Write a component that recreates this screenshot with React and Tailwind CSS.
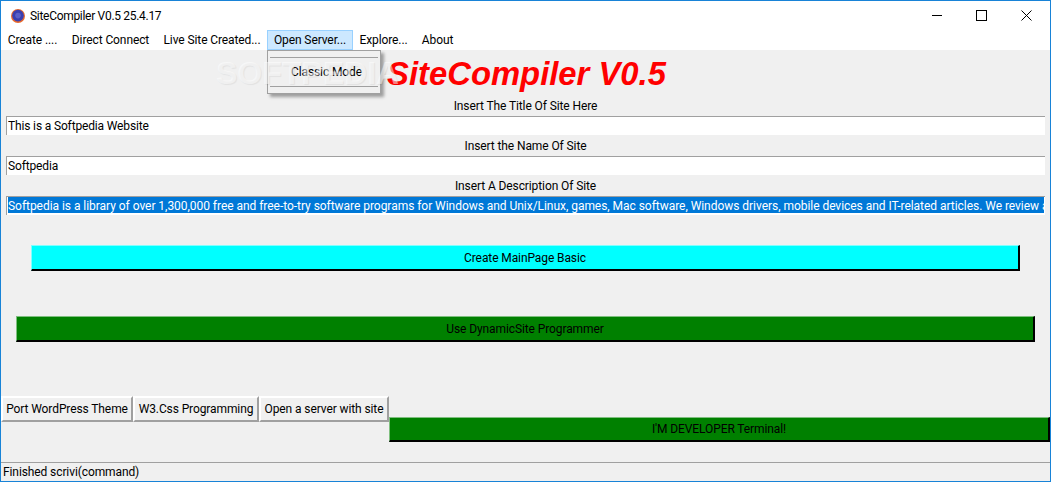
const menus = [
  { label: "Create ....", width: "w-[63px]" },
  { label: "Direct Connect", width: "w-[93px]" },
  { label: "Live Site Created...", width: "w-[110px]" },
  { label: "Open Server...", width: "w-[86px]" },
  { label: "Explore...", width: "w-[61px]" },
  { label: "About", width: "w-[47px]" },
];
const description =
  "Softpedia is a library of over 1,300,000 free and free-to-try software programs for Windows and Unix/Linux, games, Mac software, Windows drivers, mobile devices and IT-related articles. We review and categorize these products";

function Field({ label, value, selected }) {
  return (
    <div className="flex flex-col">
      <div className="h-5 flex items-center justify-center leading-none">{label}</div>
      <div className="h-[19px] mb-px mx-[5px] bg-white border-t border-l border-t-[#a0a0a0] border-l-[#a0a0a0] pl-px pr-px overflow-hidden">
        <div className={`h-4 leading-[18px] whitespace-nowrap overflow-hidden ${selected ? "bg-[#0078d7] text-white tracking-[-0.04px]" : "tracking-[-0.15px]"}`}>
          {value}
        </div>
      </div>
    </div>
  );
}

function TkButton({ label, className }) {
  return (
    <div className={`border border-t-[#7fbf7f] border-l-[#7fbf7f] border-r-2 border-r-black border-b-2 border-b-black flex items-center justify-center ${className}`}>
      {label}
    </div>
  );
}

function RaisedButton({ label, width }) {
  return (
    <div className={`h-[26px] ${width} bg-[#f0f0f0] border-2 border-t-white border-l-white border-r-[#a0a0a0] border-b-[#a0a0a0] flex items-center justify-center whitespace-nowrap`}>
      {label}
    </div>
  );
}

export default function App() {
  return (
    <div className="w-[1051px] h-[482px] overflow-hidden flex flex-col border border-[#1883d7] bg-[#f0f0f0] text-[12px] tracking-[-0.1px] text-black font-['Roboto','Liberation_Sans',sans-serif]">
      <div className="h-[29px] shrink-0 bg-white flex items-center">
        <svg width="16" height="16" viewBox="0 0 16 16" className="ml-[9px] mr-[4px]">
          <circle cx="8" cy="8" r="7" fill="#e8692b" />
          <circle cx="8" cy="7.6" r="5.8" fill="#3b3fb0" />
          <circle cx="8" cy="7.6" r="2.8" fill="#5a5fc8" />
        </svg>
        <span className="tracking-[-0.3px]">SiteCompiler V0.5 25.4.17</span>
        <div className="ml-auto mr-px flex items-center">
          <div className="w-[45px] flex justify-center">
            <svg width="11" height="11" viewBox="0 0 11 11">
              <path d="M0.5 5.5H10.5" stroke="black" strokeWidth="1" shapeRendering="crispEdges" />
            </svg>
          </div>
          <div className="w-[45px] flex justify-center">
            <svg width="11" height="11" viewBox="0 0 11 11">
              <rect x="0.5" y="0.5" width="10" height="10" fill="none" stroke="black" strokeWidth="1" />
            </svg>
          </div>
          <div className="w-[45px] flex justify-center">
            <svg width="11" height="11" viewBox="0 0 11 11">
              <path d="M0.5 0.5L10.5 10.5M10.5 0.5L0.5 10.5" stroke="black" strokeWidth="1" />
            </svg>
          </div>
        </div>
      </div>

      <div className="h-5 shrink-0 bg-white flex items-stretch relative tracking-[-0.1px]">
        {menus.map((m, i) => (
          <div
            key={m.label}
            className={`${m.width} flex items-center justify-center whitespace-nowrap border ${
              i === 3 ? "bg-[#cce8ff] border-[#99d1ff]" : "border-transparent"
            }`}
          >
            {m.label}
          </div>
        ))}
        <div className="absolute left-[266px] top-[20px] w-[114px] h-[44px] z-10 bg-[#f0f0f0] border border-[#a0a0a0] shadow-[3px_3px_3px_rgba(0,0,0,0.35)] flex flex-col justify-between py-[6px] px-[2px]">
          <div className="h-px bg-[#a0a0a0]" />
          <div className="text-center leading-none pl-[5px]">Classic Mode</div>
          <div className="h-px bg-[#a0a0a0]" />
        </div>
      </div>

      <div className="flex-1 flex flex-col relative min-h-0">
        <div className="h-[46px] shrink-0 flex items-center justify-center pt-[2px] font-['Liberation_Sans',sans-serif] font-bold italic text-[32.8px] tracking-normal text-[#ff0000] leading-none pl-[2px]">
          SiteCompiler V0.5
        </div>
        <div className="absolute left-[215px] top-[7px] z-20 text-[32px] font-bold leading-none tracking-normal text-white/50 [text-shadow:1px_1px_1px_rgba(0,0,0,0.06)] font-['Liberation_Sans',sans-serif]">
          SOFTPEDIA
        </div>

        <Field label="Insert The Title Of Site Here" value="This is a Softpedia Website" />
        <Field label="Insert the Name Of Site" value="Softpedia" />
        <Field label="Insert A Description Of Site" value={description} selected />

        <TkButton
          label="Create MainPage Basic"
          className="mt-[29px] ml-[30px] w-[989px] h-[26px] bg-[#00ffff] border-t-[#7fffff] border-l-[#7fffff]"
        />
        <TkButton label="Use DynamicSite Programmer" className="mt-[45px] ml-[15px] w-[1019px] h-[26px] bg-[#008000]" />

        <div className="mt-[54px] flex items-start">
          <RaisedButton label="Port WordPress Theme" width="w-[132px]" />
          <RaisedButton label="W3.Css Programming" width="w-[126px]" />
          <RaisedButton label="Open a server with site" width="w-[130px]" />
          <TkButton label="I'M DEVELOPER Terminal!" className="mt-[21px] flex-1 h-[25px] bg-[#008000]" />
        </div>

        <div className="mt-auto h-[19px] border-t border-t-[#a0a0a0] flex items-center pl-[2px] whitespace-nowrap">
          Finished scrivi(command)
        </div>
      </div>
    </div>
  );
}
